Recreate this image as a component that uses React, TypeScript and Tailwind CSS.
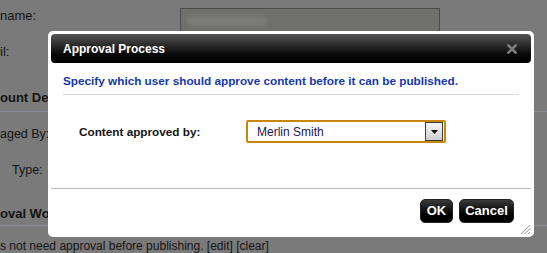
export default function App() {
  return (
    <div className="relative w-[547px] h-[253px] overflow-hidden bg-[#7a7a7a] text-[12px] text-[#141414] font-['Liberation_Sans',Arial,sans-serif]">
      {/* page behind the modal */}
      <div className="flex items-start h-[41px] pt-[8px]">
        <span className="text-[13px] leading-[16px] w-[180px]">name:</span>
        <div className="w-[260px] h-[25px] border border-[#4b4b4b] bg-[#6f6f6b] flex items-center px-[6px]">
          <div className="w-[80px] h-[10px] rounded-sm bg-[#7c7c78] blur-[2px]" />
        </div>
      </div>
      <div className="h-[22px] leading-[22px] text-[13px]">il:</div>
      <div className="pt-[27px] pb-[5px] border-b border-[#8a9098]">
        <span className="block leading-[16px] font-bold text-[13px]">ount Details</span>
      </div>
      <div className="h-[44px] leading-[44px] text-[12.5px]">aged By:</div>
      <div className="h-[28px] leading-[28px] pl-[12px] text-[12.5px]">Type:</div>
      <div className="pt-[22px] pb-[3px] border-b border-[#8a9098]">
        <span className="block leading-[16px] font-bold text-[13px]">oval Workflow</span>
      </div>
      <div className="pt-[12px] leading-[16px] whitespace-nowrap">
        s not need approval before publishing. [edit] [clear]
      </div>

      {/* modal dialog */}
      <div className="absolute left-[48px] top-[31px] w-[486px] h-[206px] bg-white rounded-[5px] p-[3px] flex flex-col text-[12px]">
        <div className="h-[29px] shrink-0 rounded-[4px] bg-[linear-gradient(to_bottom,#555555,#080808_70%,#000000)] flex items-center justify-between pl-[12px] pr-[14px]">
          <span className="font-bold text-white leading-[16px]">Approval Process</span>
          <svg width="10" height="10" viewBox="0 0 10 10" className="block">
            <path d="M1.5 1.5 L8.5 8.5 M8.5 1.5 L1.5 8.5" stroke="#7e7e7e" strokeWidth="2.6" strokeLinecap="square" />
          </svg>
        </div>

        <div className="mx-[12px] pt-[10px] pb-[5px] border-b border-[#dcdcdc]">
          <p className="font-bold text-[11.75px] text-[#1438b0] leading-[16px] whitespace-nowrap">
            Specify which user should approve content before it can be published.
          </p>
        </div>

        <div className="flex items-center h-[23px] mt-[25px] pl-[28px]">
          <span className="w-[167px] font-bold text-[11.75px] leading-[16px]">Content approved by:</span>
          <div className="w-[200px] h-[23px] border-2 border-[#c8870c] rounded-[2px] flex items-center justify-between pl-[9px] pr-[1px]">
            <span className="text-[#1c1450] leading-[16px]">Merlin Smith</span>
            <div className="w-[18px] h-[19px] border border-[#3a3a3a] bg-[linear-gradient(to_bottom,#f6f6f6,#cfcfcf)] flex items-center justify-center">
              <svg width="7" height="4" viewBox="0 0 7 4" className="block">
                <path d="M0 0 H7 L3.5 4 Z" fill="#111" />
              </svg>
            </div>
          </div>
        </div>

        <div className="mt-[45px] border-t border-[#bcbcbc]" />

        <div className="flex justify-end gap-[6px] mt-[10px] pr-[17px]">
          <button className="w-[33px] h-[24px] rounded-[5px] border border-[#222] bg-[linear-gradient(to_bottom,#3a3a3a,#000000_65%)] text-white font-bold text-[13px] leading-[16px]">
            OK
          </button>
          <button className="w-[55px] h-[24px] rounded-[5px] border border-[#222] bg-[linear-gradient(to_bottom,#3a3a3a,#000000_65%)] text-white font-bold text-[13px] leading-[16px]">
            Cancel
          </button>
        </div>

        <div className="flex justify-end mt-auto">
          <svg width="12" height="12" viewBox="0 0 12 12" className="block">
            <path d="M11 2 L2 11 M11 5.5 L5.5 11 M11 9 L9 11" stroke="#9a9a9a" strokeWidth="1" />
          </svg>
        </div>
      </div>
    </div>
  );
}
